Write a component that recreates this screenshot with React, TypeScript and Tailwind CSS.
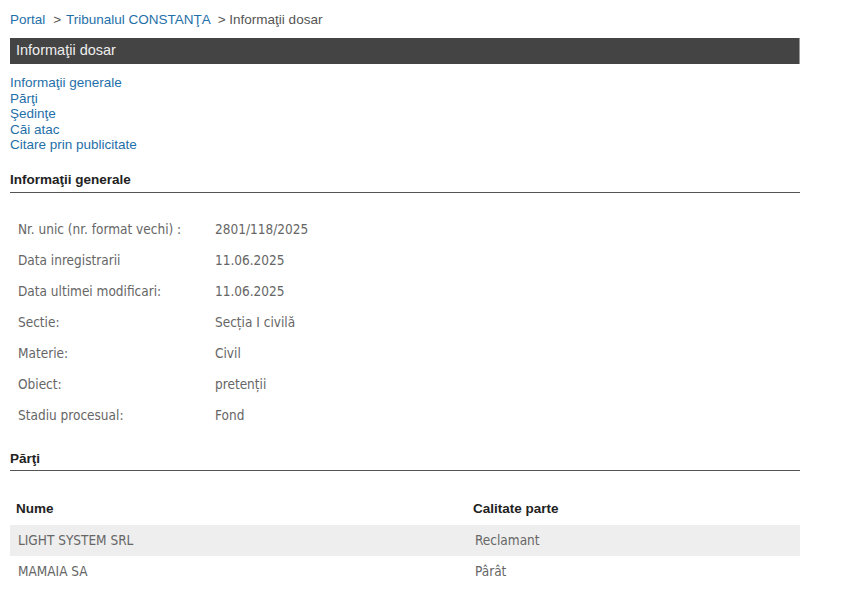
import React from 'react';

const links = ['Informaţii generale', 'Părţi', 'Şedinţe', 'Căi atac', 'Citare prin publicitate'];

const info: [string, string][] = [
  ['Nr. unic (nr. format vechi) :', '2801/118/2025'],
  ['Data inregistrarii', '11.06.2025'],
  ['Data ultimei modificari:', '11.06.2025'],
  ['Sectie:', 'Secția I civilă'],
  ['Materie:', 'Civil'],
  ['Obiect:', 'pretenții'],
  ['Stadiu procesual:', 'Fond'],
];

const parti: [string, string][] = [
  ['LIGHT SYSTEM SRL', 'Reclamant'],
  ['MAMAIA SA', 'Pârât'],
];

const arial = "font-['Liberation_Sans',Arial,sans-serif]";
const tahoma = "font-['DejaVu_Sans_Condensed','DejaVu_Sans',sans-serif]";

const SectionTitle: React.FC<{ title: string; className?: string }> = ({ title, className }) => (
  <div className={`border-b border-[#555] ${className ?? ''}`}>
    <h2 className="text-[13.5px] leading-[16px] font-bold text-[#222]">{title}</h2>
  </div>
);

export default function App() {
  return (
    <div className={`min-h-[590px] bg-white ${arial}`}>
      <div className="w-[790px] ml-[10px]">
        {/* Breadcrumb */}
        <div className="pt-[12px] text-[13.5px] leading-[16px] text-[#555]">
          <a href="#" className="text-[#1f6fa8]">Portal</a>
          <span className="ml-[8px]">&gt; </span>
          <a href="#" className="ml-[1px] text-[#1f6fa8]">Tribunalul CONSTANŢA</a>
          <span className="ml-[7px]">&gt; Informaţii dosar</span>
        </div>

        {/* Title bar */}
        <div className="mt-[10px] h-[26px] bg-[#444] border-r border-[#999] flex items-center pl-[6px]">
          <span className="text-[14.5px] text-[#eee]">Informaţii dosar</span>
        </div>

        {/* Anchors */}
        <ul className="mt-[11px] text-[13.5px] leading-[15.5px]">
          {links.map(l => (
            <li key={l}>
              <a href="#" className="text-[#1f6fa8]">{l}</a>
            </li>
          ))}
        </ul>

        <SectionTitle title="Informaţii generale" className="mt-[19px] pb-[4px]" />

        <table className={`mt-[21px] border-collapse ${tahoma} text-[13.5px] text-[#666]`}>
          <tbody>
            {info.map(([k, v]) => (
              <tr key={k} className="h-[31px]">
                <td className="w-[205px] pl-[8px] align-middle">{k}</td>
                <td className="align-middle">{v}</td>
              </tr>
            ))}
          </tbody>
        </table>

        <SectionTitle title="Părţi" className="mt-[20px] pb-[3px]" />

        <table className="mt-[23px] w-full border-collapse">
          <thead>
            <tr className="h-[31px] text-[13.5px] font-bold text-[#222] text-left">
              <th className="w-[457px] pl-[6px] font-bold">Nume</th>
              <th className="pl-[6px] font-bold">Calitate parte</th>
            </tr>
          </thead>
          <tbody className={`${tahoma} text-[13.5px] text-[#666]`}>
            {parti.map(([n, c], i) => (
              <tr key={n} className={`h-[31px] ${i % 2 === 0 ? 'bg-[#eee]' : ''}`}>
                <td className="pl-[8px]">{n}</td>
                <td className="pl-[8px]">{c}</td>
              </tr>
            ))}
          </tbody>
        </table>
      </div>
    </div>
  );
}
